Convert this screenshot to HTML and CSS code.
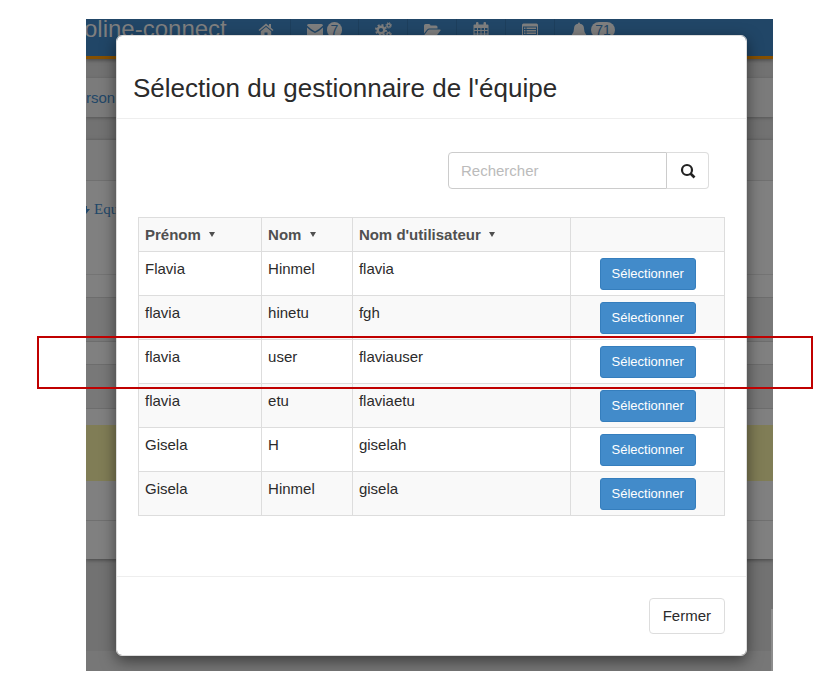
FILE: index.html
```html
<!DOCTYPE html>
<html lang="fr">
<head>
<meta charset="utf-8">
<meta name="viewport" content="width=device-width, initial-scale=1">
<title>Sélection du gestionnaire de l'équipe</title>
<link rel="stylesheet" href="styles.css">
</head>
<body>
<div class="stage">
  <div class="screen">
  <div class="page">
    <header class="navbar">
      <span class="brand">oline-connect</span>
      <nav class="nav">
        <a href="#" aria-label="Accueil"><svg width="16" height="16" viewBox="0 0 16 16"><path d="M8 1.600 0.500 8l1 1.100L8 3.700l6.500 5.400 1-1.100L13 5.800V2h-2v2.100zM2.800 9.200V14.500H6.500V10.500h3v4h3.700V9.200L8 5z"/></svg></a>
        <a href="#" class="wide" aria-label="Messages"><svg width="16" height="16" viewBox="0 0 16 16"><path d="M0 3.500Q0 2 1.500 2h13Q16 2 16 3.500 12 7.500 8 9.500 4 7.500 0 3.500zM0 5.500Q4 9.500 8 11 12 9.500 16 5.500V13q0 1.500-1.500 1.500h-13Q0 14.500 0 13z"/></svg><span class="badge">7</span></a>
        <a href="#" aria-label="Outils"><svg width="17" height="16" viewBox="0 0 17 16"><g fill="none" stroke="currentColor"><circle cx="6" cy="8" r="3.300" stroke-width="2.400"/><circle cx="6" cy="8" r="5" stroke-width="2" stroke-dasharray="1.960 1.960"/><circle cx="13.700" cy="3.400" r="1.700" stroke-width="1.400"/><circle cx="13.700" cy="3.400" r="2.700" stroke-width="1" stroke-dasharray="1.200 0.920"/><circle cx="13.700" cy="12.500" r="1.700" stroke-width="1.400"/><circle cx="13.700" cy="12.500" r="2.700" stroke-width="1" stroke-dasharray="1.200 0.920"/></g></svg></a>
        <a href="#" aria-label="Dossiers"><svg width="17" height="16" viewBox="0 0 17 16"><path d="M0 3.500Q0 2 1.500 2H5q1.500 0 1.500 1.500H12q1.500 0 1.500 1.500v1.500H5.500Q4 6.500 3 7.700L0 11.500zM5.500 7.500H16q1.200 0 .5 1L13.500 12.500Q12.500 13.800 11 13.800H1q-1.200 0-.5-1L3.500 8.800Q4.500 7.500 5.500 7.500z"/></svg></a>
        <a href="#" aria-label="Agenda"><svg width="16" height="16" viewBox="0 0 16 16"><path fill-rule="evenodd" d="M1.500 2.500H3V1q0-1 1-1h.5q1 0 1 1v1.500h5V1q0-1 1-1h.5q1 0 1 1v1.500h1.500Q15.500 2.500 15.500 3.500V16H.5V3.500Q.5 2.500 1.500 2.500zM1.500 6v2H4V6zM5 6v2h2.500V6zM8.500 6v2H11V6zM12 6v2h2.500V6zM1.500 9v2.500H4V9zM5 9v2.500h2.500V9zM8.500 9v2.500H11V9zM12 9v2.500h2.500V9zM1.500 12.500V15H4v-2.500zM5 12.500V15h2.500v-2.500zM8.500 12.500V15H11v-2.500zM12 12.500V15h2.500v-2.500z"/></svg></a>
        <a href="#" aria-label="Listes"><svg width="16" height="16" viewBox="0 0 16 16"><path fill-rule="evenodd" d="M1.500 1.500h13Q16 1.500 16 3v9.500q0 1.500-1.500 1.500h-13Q0 14 0 12.500V3Q0 1.500 1.500 1.500zM1 4.500v8.500h14V4.500z"/><path d="M2 5.500h1.500V7H2zM4.500 5.500H14V7H4.500zM2 8h1.500v1.500H2zM4.500 8H14v1.500H4.500zM2 10.500h1.500V12H2zM4.500 10.500H14V12H4.500z"/></svg></a>
        <a href="#" class="wide" aria-label="Notifications"><svg width="16" height="16" viewBox="0 0 16 16"><path d="M8 .5q1 0 1 1.200Q13 2.500 13 6.500 13 10.500 15.200 12.800v.7H.8v-.7Q3 10.500 3 6.500 3 2.500 7 1.700 7 .5 8 .5zM6 14h4q-.5 1.500-2 1.500T6 14z"/></svg><span class="badge">71</span></a>
      </nav>
    </header>
    <div class="crumbs"><a href="#">rson</a></div>
    <main class="panel">
      <div class="panel-head"></div>
      <div class="panel-body"><a href="#"><svg width="4" height="10" viewBox="0 0 4 10"><path d="M0 2h1v3h3L0 10z"/></svg>Equ</a></div>
      <div class="strip"></div>
      <div class="strip dark"></div>
      <div class="strip"></div>
      <div class="strip dark"></div>
      <div class="strip thin"></div>
      <div class="notice"></div>
      <div class="line"></div>
      <div class="line"></div>
    </main>
    <div class="filler"></div>
    <footer class="foot"></footer>
  </div>

  <section class="modal" role="dialog" aria-labelledby="modal-title">
    <header class="modal-head"><h1 id="modal-title">Sélection du gestionnaire de l'équipe</h1></header>
    <div class="modal-body">
      <form class="search">
        <input type="text" placeholder="Rechercher" aria-label="Rechercher">
        <button type="button" aria-label="Lancer la recherche"><svg width="16" height="16" viewBox="0 0 16 16"><circle cx="7" cy="7" r="5" fill="none" stroke="currentColor" stroke-width="2.200"/><path d="M10.500 10.500l4 4" stroke="currentColor" stroke-width="2.600"/></svg></button>
      </form>
      <table>
        <colgroup><col class="c-first"><col class="c-last"><col class="c-user"><col class="c-action"></colgroup>
        <thead>
          <tr><th>Prénom <i class="caret"></i></th><th>Nom <i class="caret"></i></th><th>Nom d'utilisateur <i class="caret"></i></th><th></th></tr>
        </thead>
        <tbody>
          <tr><td>Flavia</td><td>Hinmel</td><td>flavia</td><td><button type="button">Sélectionner</button></td></tr>
          <tr><td>flavia</td><td>hinetu</td><td>fgh</td><td><button type="button">Sélectionner</button></td></tr>
          <tr><td>flavia</td><td>user</td><td>flaviauser</td><td><button type="button">Sélectionner</button></td></tr>
          <tr><td>flavia</td><td>etu</td><td>flaviaetu</td><td><button type="button">Sélectionner</button></td></tr>
          <tr><td>Gisela</td><td>H</td><td>giselah</td><td><button type="button">Sélectionner</button></td></tr>
          <tr><td>Gisela</td><td>Hinmel</td><td>gisela</td><td><button type="button">Sélectionner</button></td></tr>
        </tbody>
      </table>
    </div>
    <footer class="modal-foot"><button type="button">Fermer</button></footer>
  </section>
  </div>
  <div class="scroll-edge"></div>
  <div class="highlight"></div>
</div>
</body>
</html>
```
FILE: styles.css
```css
* { box-sizing: border-box; }

body {
  margin: 0;
  padding: 19px 64px 25px 86px;
  background: #fff;
  color: #2b2b2b;
  font: 15px/20px "Liberation Sans", Arial, sans-serif;
}

a { color: #224768; text-decoration: none; }
svg { display: block; fill: currentColor; flex: none; }
button, input { font: inherit; margin: 0; }

.stage { position: relative; }

/* The page and the dialog share one grid cell */
.screen { display: grid; overflow: hidden; }
.page, .modal { grid-area: 1 / 1; min-width: 0; }

.page {
  display: flex;
  flex-direction: column;
  overflow: hidden;
  background: #727272;
}

.navbar {
  display: flex;
  height: 40px;
  background: #214667;
  border-bottom: 3px solid #865000;
  box-shadow: 0 1px 4px #444;
  color: #7f7f7f;
}
.brand {
  width: 158px;
  margin-left: -2px;
  font-size: 24px;
  line-height: 20px;
}
.nav { display: flex; height: 21px; }
.nav a {
  display: flex;
  justify-content: center;
  align-items: center;
  gap: 4px;
  width: 49px;
  border-right: 1px solid #1d3f5d;
  color: #7f7f7f;
}
.nav a.wide { width: 68px; }
.nav a.wide:last-child { width: 76px; border: 0; }
.badge {
  padding: 0 4px;
  border-radius: 8px;
  background: #7f7f7f;
  color: #214667;
  font-size: 14px;
  line-height: 16px;
}

.crumbs {
  height: 39px;
  margin-top: 19px;
  padding-top: 10px;
  background: #7b7b7b;
  box-shadow: 0 1px 3px #555;
}

.panel {
  margin-top: 23px;
  background: #808080;
  box-shadow: 0 1px 4px #444;
}
.panel-head { height: 41px; background: #7b7b7b; border-bottom: 1px solid #707070; }
.panel-body { height: 94px; padding-top: 18px; border-bottom: 1px solid #747474; }
.panel-body a {
  display: flex;
  align-items: center;
  gap: 4px;
  font-family: "Liberation Serif", serif;
}
.strip { height: 23px; border-bottom: 1px solid #6d6d6d; }
.strip.dark { height: 44px; background: #787878; }
.strip.thin { height: 16px; border: 0; }
.notice { height: 56px; background: #807d56; }
.line { height: 39px; }
.line + .line { border-top: 1px solid #707070; }
.filler { flex: 1; }
.foot { height: 20px; background: #777; }

.modal {
  margin: 16px 26px 15px 30px;
  background: #fff;
  border: 1px solid #ddd;
  border-radius: 6px;
  box-shadow: 0 5px 15px rgba(0, 0, 0, 0.5);
  background-clip: padding-box;
}
.modal-head { padding: 36px 16px 14px; border-bottom: 1px solid #eee; }
h1 { margin: 0; font-size: 26px; font-weight: 400; line-height: 32px; }
.modal-body { padding: 33px 21px 60px; }

.search {
  display: flex;
  width: 261px;
  margin: 0 16px 28px auto;
}
.search input {
  flex: 1;
  min-width: 0;
  height: 37px;
  padding: 0 12px;
  border: 1px solid #ccc;
  border-radius: 4px 0 0 4px;
  background: #fff;
}
.search input::placeholder { color: #bbb; opacity: 1; }
.search button {
  display: flex;
  justify-content: center;
  align-items: center;
  width: 42px;
  height: 37px;
  padding: 0;
  border: 1px solid #ddd;
  border-left: 0;
  border-radius: 0 4px 4px 0;
  background: #fff;
  color: #222;
}

table {
  width: 100%;
  border: 1px solid #ddd;
  border-collapse: collapse;
  table-layout: fixed;
}
.c-first { width: 21%; }
.c-last { width: 15.5%; }
.c-user { width: 37.3%; }
th, td {
  border: 1px solid #ddd;
  text-align: left;
  vertical-align: top;
}
th { height: 34px; padding: 7px 6px 6px; background: #f9f9f9; color: #505050; line-height: 20px; }
td { height: 44px; padding: 7px 6px; }
tbody tr:nth-child(even) { background: #f9f9f9; }
td:last-child { padding: 6px 0 5px; text-align: center; }
td button {
  display: block;
  width: 96px;
  height: 32px;
  margin: 0 auto;
  padding: 0;
  border: 1px solid #357ebd;
  border-radius: 3px;
  background: #428bca;
  color: #fff;
  font-size: 13px;
}
.caret {
  display: inline-block;
  margin-left: 4px;
  border: 3px solid transparent;
  border-top: 5px solid #505050;
  border-bottom: 0;
  vertical-align: 3px;
}

.modal-foot {
  display: flex;
  justify-content: flex-end;
  padding: 21px;
  border-top: 1px solid #eee;
}
.modal-foot button {
  height: 36px;
  padding: 0 13px;
  border: 1px solid #ddd;
  border-radius: 4px;
  background: #fff;
  color: #2b2b2b;
}

/* Marks the third row, reaching past the page on both sides */
.highlight {
  position: absolute;
  top: 317px;
  left: -49px;
  right: -40px;
  height: 53px;
  border: 2px solid #c00000;
}
.scroll-edge {
  position: absolute;
  right: 0;
  bottom: 0;
  width: 2px;
  height: 62px;
  background: #8c8c8c;
}
```
